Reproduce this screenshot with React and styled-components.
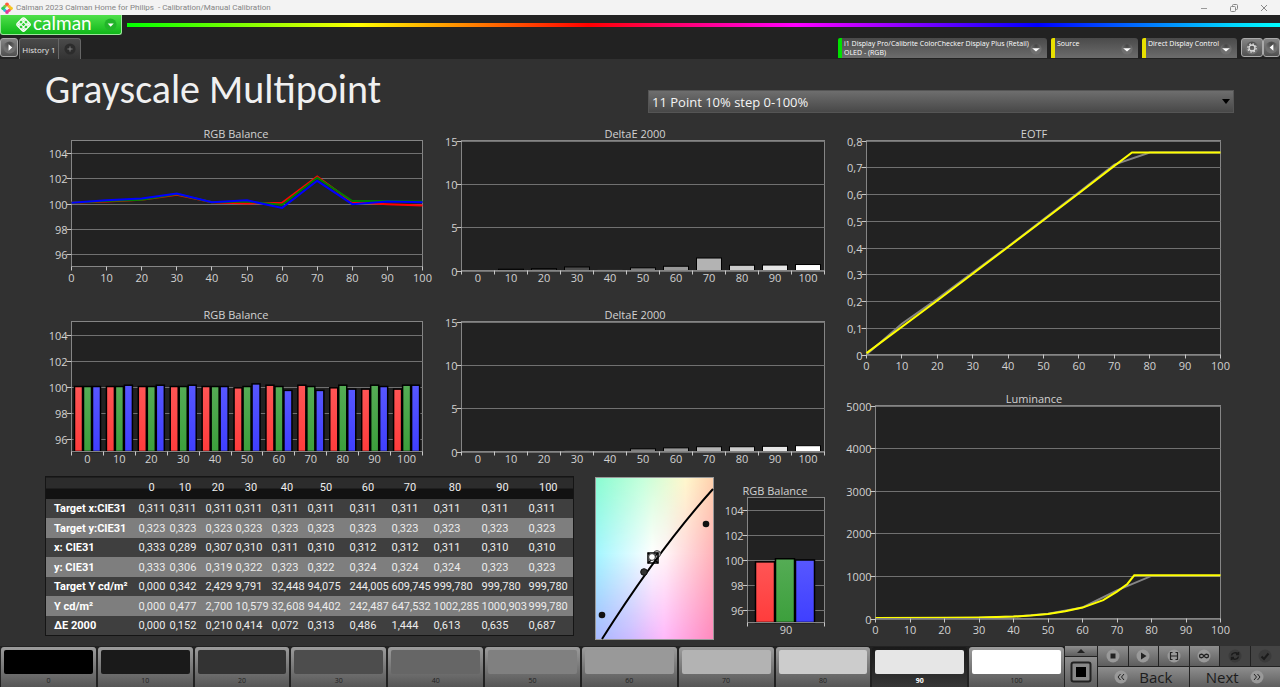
import React, { useState } from 'react';
import styled, { createGlobalStyle, css } from 'styled-components';

const GlobalStyle = createGlobalStyle`
    * {
        box-sizing: border-box;
    }

    body {
        margin: 0;
        background: #313131;
        color: #d8d8d8;
        font-family: 'Open Sans', 'Noto Sans', sans-serif;
    }

    button, select {
        margin: 0;
        padding: 0;
        border: none;
        font-family: inherit;
        cursor: pointer;
    }

    svg {
        display: block;
    }
`;

const Page = styled.div`
    display: flex;
    flex-direction: column;
    min-height: 100vh;
`;

/* window title bar */

const TitleBar = styled.div`
    display: flex;
    align-items: center;
    height: 15px;
    padding: 0 10px 0 1px;
    background: #f3f3f3;
    color: #858585;
    font-family: Roboto, sans-serif;
    font-size: 8px;
    line-height: 15px;
    white-space: pre;
`;

const WindowTitle = styled.span`
    flex: 1;
    margin-left: 3px;
`;

const WindowButtons = styled.div`
    display: flex;
    gap: 18px;
`;

const WindowButton = styled.button`
    display: flex;
    width: 12px;
    height: 12px;
    background: none;
`;

/* header */

const Header = styled.header`
    background: #222;
`;

const BrandRow = styled.div`
    display: flex;
    align-items: flex-start;
    height: 23px;
`;

const Brand = styled.button`
    display: flex;
    align-items: center;
    width: 122px;
    height: 20px;
    padding: 0 4px 0 14px;
    border: 1px solid #9be89b;
    border-top: none;
    border-radius: 0 0 3px 3px;
    background: linear-gradient(#4fe04a, #10b81a);
`;

const BrandName = styled.span`
    flex: 1;
    margin-left: 1px;
    padding-bottom: 3px;
    color: #fff;
    font-family: Lato, sans-serif;
    font-size: 19px;
    line-height: 16px;
    text-align: left;
`;

const Rainbow = styled.div`
    flex: 1;
    height: 4px;
    margin: 8px 0 0 5px;
    background: linear-gradient(90deg, #00ff00 0%, #ffff00 20%, #ff0000 40%, #ff00ff 58%, #0000ff 79%, #00d8ff 96%, #00ffff 100%);
`;

const TabRow = styled.div`
    display: flex;
    align-items: flex-start;
    height: 21px;
`;

const Spacer = styled.div`
    flex: 1;
`;

const SquareButton = styled.button`
    display: flex;
    align-items: center;
    justify-content: center;
    flex: none;
    width: ${(props) => props.$width}px;
    height: 19px;
    border: 1px solid #aaa;
    border-radius: 3px;
    background: linear-gradient(#858585, #505050);
`;

const HistoryTabs = styled.div`
    display: flex;
    height: 21px;
    margin-left: 1px;
    border: 1px solid #666;
    border-bottom: none;
    border-radius: 3px 3px 0 0;
    background: linear-gradient(#4a4a4a, #333);
`;

const HistoryTab = styled.button`
    display: flex;
    align-items: center;
    justify-content: center;
    width: ${(props) => props.$width}px;
    border-right: ${(props) => (props.$divided ? '1px solid #666' : 'none')};
    background: none;
    color: #e4e4e4;
    font-size: 8px;
`;

const Device = styled.button`
    display: flex;
    align-items: flex-start;
    flex: none;
    width: ${(props) => props.$width}px;
    height: 20px;
    margin-right: 4px;
    padding: 0 5px 0 2px;
    border-left: 4px solid ${(props) => props.$color};
    border-radius: 2px 3px 0 0;
    background: linear-gradient(#4a4a4a, #6c6c6c);
    color: #fff;
    font-size: 7px;
    font-weight: 500;
    line-height: 9px;
    text-align: left;
    white-space: nowrap;
`;

const DeviceLabel = styled.span`
    flex: 1;
    padding-top: 1px;
`;

const DeviceArrow = styled.span`
    align-self: center;
    margin-top: 2px;
`;

/* workspace */

const Main = styled.main`
    flex: 1;
    padding: 0 40px;
    background: #313131;
`;

const Heading = styled.div`
    display: grid;
    grid-template-columns: 603fr 586fr;
    align-items: center;
    height: 61px;
    padding: 0 6px 0 5px;
`;

const Title = styled.h1`
    margin: 0;
    color: #f0f0f0;
    font-family: Carlito, Lato, sans-serif;
    font-size: 40px;
    font-weight: 400;
    line-height: 61px;
    white-space: nowrap;
`;

const SelectWrap = styled.div`
    display: grid;
    align-items: center;
    margin-top: 24px;

    > * {
        grid-area: 1 / 1;
    }

    svg {
        justify-self: end;
        margin-right: 4px;
        pointer-events: none;
    }
`;

const Select = styled.select`
    width: 100%;
    height: 23px;
    padding: 0 3px;
    border: 1px solid #555;
    background: linear-gradient(#6e6e6e, #484848);
    color: #f4f4f4;
    font-size: 13px;
    appearance: none;
`;

const Workspace = styled.div`
    display: grid;
    grid-template-columns: 2fr 1fr;
`;

const LeftCharts = styled.div`
    display: grid;
    grid-template-columns: 1fr 1fr;
    align-content: start;
`;

const BottomPanels = styled.div`
    display: grid;
    grid-column: 1 / -1;
    grid-template-columns: 529fr 130fr 106fr;
    align-items: start;
    column-gap: 10px;
    padding: 1px 10px 0 5px;
`;

const CiePanel = styled.div`
    padding: 1px 0 0 11px;
`;

const ChartSvg = styled.svg`
    width: 100%;
    height: auto;
    font-family: 'Open Sans', 'Noto Sans', sans-serif;
    font-size: 11px;
    fill: #d2d2d2;
`;

/* table */

const Table = styled.table`
    width: 100%;
    border: 1px solid #151515;
    border-collapse: collapse;
    table-layout: fixed;
    color: #ececec;
    font-family: Roboto, sans-serif;
    font-size: 11px;
    white-space: nowrap;
`;

const HeadCell = styled.th`
    height: 22px;
    padding: 0 5px 0 0;
    background: linear-gradient(#2c2c2c 50%, #121212 50%);
    font-weight: 400;
    line-height: 22px;
    text-align: center;
`;

const Row = styled.tr`
    height: ${(props) => (props.$light ? 20 : 19)}px;
    background: ${(props) => (props.$light ? '#7e7e7e' : '#3f3f3f')};
`;

const RowHead = styled.th`
    padding: 0 0 0 8px;
    color: #fff;
    font-weight: 700;
    line-height: 19px;
    text-align: left;
`;

const Cell = styled.td`
    padding: 0;
    line-height: 19px;
`;

/* footer */

const Footer = styled.footer`
    display: flex;
    height: 41px;
    background: #222;
`;

const Swatches = styled.div`
    display: flex;
    flex: 1;
`;

const Swatch = styled.button`
    display: flex;
    flex: 1;
    flex-direction: column;
    align-items: stretch;
    justify-content: flex-start;
    padding: 3px 3px 0;
    border: 1px solid #222;
    border-bottom: none;
    border-radius: 4px 4px 0 0;
    background: linear-gradient(#9c9c9c, #565656);
    color: #222;
    font-size: 7px;
    line-height: 14px;

    ${(props) => props.$active && css`
        background: linear-gradient(#1a1a1a, #363636);
        color: #fff;
        font-weight: 700;
    `}
`;

const SwatchColor = styled.span`
    flex: none;
    height: 24px;
    border-radius: 2px;
    background: ${(props) => props.$color};
`;

const Controls = styled.div`
    display: grid;
    grid-template-columns: 32px 182px;
    gap: 1px;
`;

const PatternColumn = styled.div`
    display: grid;
    grid-template-rows: 10px 1fr;
    gap: 1px;
`;

const TransportGrid = styled.div`
    display: grid;
    grid-template-rows: 20px 1fr;
    gap: 1px;
`;

const ButtonRow = styled.div`
    display: flex;
    gap: 1px;
`;

const ControlButton = styled.button`
    display: flex;
    flex: 1;
    align-items: center;
    justify-content: center;
    gap: 11px;
    background: ${(props) => (props.$dim ? '#444' : 'linear-gradient(#8e8e8e, #5e5e5e)')};
    color: #1c1c1c;
    font-size: 15px;
    font-weight: 500;
    line-height: 20px;
`;

const levels = [0, 10, 20, 30, 40, 50, 60, 70, 80, 90, 100];

const redLine = [100.05, 100.15, 100.3, 100.7, 100.1, 100, 100.05, 102.15, 100.1, 99.95, 99.85];
const greenLine = [100.05, 100.2, 100.3, 100.75, 100.1, 100.15, 99.9, 102.05, 100.2, 100.2, 100.15];
const blueLine = [100.05, 100.25, 100.4, 100.8, 100.1, 100.25, 99.65, 101.8, 99.95, 100.15, 100.1];

const balance = [
    [100, 100, 100],
    [100, 100, 100.1],
    [100, 100, 100.1],
    [100, 100, 100.1],
    [100, 100, 100],
    [99.9, 100, 100.2],
    [100.1, 100, 99.7],
    [100.1, 100, 99.7],
    [99.9, 100.1, 99.8],
    [99.8, 100.1, 100],
    [99.8, 100.1, 100.1],
];

const measuredDelta = [0, 0.15, 0.21, 0.41, 0.07, 0.31, 0.49, 1.44, 0.61, 0.63, 0.69];
const chromaDelta = [0, 0.05, 0.05, 0.1, 0.05, 0.31, 0.42, 0.55, 0.55, 0.6, 0.67];

const tableRows = [
    ['Target x:CIE31', '0,311', '0,311', '0,311', '0,311', '0,311', '0,311', '0,311', '0,311', '0,311', '0,311', '0,311'],
    ['Target y:CIE31', '0,323', '0,323', '0,323', '0,323', '0,323', '0,323', '0,323', '0,323', '0,323', '0,323', '0,323'],
    ['x: CIE31', '0,333', '0,289', '0,307', '0,310', '0,311', '0,310', '0,312', '0,312', '0,311', '0,310', '0,310'],
    ['y: CIE31', '0,333', '0,306', '0,319', '0,322', '0,323', '0,322', '0,324', '0,324', '0,324', '0,323', '0,323'],
    ['Target Y cd/m²', '0,000', '0,342', '2,429', '9,791', '32,448', '94,075', '244,005', '609,745', '999,780', '999,780', '999,780'],
    ['Y cd/m²', '0,000', '0,477', '2,700', '10,579', '32,608', '94,402', '242,487', '647,532', '1002,285', '1000,903', '999,780'],
    ['ΔE 2000', '0,000', '0,152', '0,210', '0,414', '0,072', '0,313', '0,486', '1,444', '0,613', '0,635', '0,687'],
];

const columnWidths = [93, 31, 36, 30, 36, 36, 42, 42, 42, 48, 47, 45];

const balanceTicks = [96, 98, 100, 102, 104].map((v) => [v, String(v)]);
const deltaTicks = [0, 5, 10, 15].map((v) => [v, String(v)]);
const eotfTicks = [0, 1, 2, 3, 4, 5, 6, 7, 8].map((v) => [v / 10, v ? `0,${v}` : '0']);
const luminanceTicks = [0, 1000, 2000, 3000, 4000, 5000].map((v) => [v, String(v)]);

const barColors = ['red', 'green', 'blue'];

const scaleY = (plot, range, v) =>
    plot.bottom - ((v - range[0]) / (range[1] - range[0])) * (plot.bottom - plot.top);

const toPoints = (plot, range, points) =>
    points
        .map(([x, y]) => `${plot.left + (x / 100) * (plot.right - plot.left)},${scaleY(plot, range, y)}`)
        .join(' ');

const GradientDefs = styled.svg`
    position: absolute;
`;

const Gradients = () => (
    <GradientDefs width="0" height="0" aria-hidden="true">
        <defs>
            <linearGradient id="bar-red" x2="0" y2="1">
                <stop stopColor="#ff5555" />
                <stop offset="1" stopColor="#ff3c3c" />
            </linearGradient>
            <linearGradient id="bar-green" x2="0" y2="1">
                <stop stopColor="#55ac55" />
                <stop offset="1" stopColor="#3c9f3c" />
            </linearGradient>
            <linearGradient id="bar-blue" x2="0" y2="1">
                <stop stopColor="#5757ff" />
                <stop offset="1" stopColor="#3f3fff" />
            </linearGradient>
            <radialGradient id="knob" cy="0.2">
                <stop stopColor="#444" />
                <stop offset="1" stopColor="#707070" />
            </radialGradient>
        </defs>
    </GradientDefs>
);

const Chart = ({ title, titleX, width = 400, height, plot, range, ticks, categories, children }) => {
    const banded = Boolean(categories);
    const labels = categories || levels;
    const step = (plot.right - plot.left) / (banded ? labels.length : labels.length - 1);
    const tickCount = banded ? labels.length + 1 : labels.length;

    return (
        <ChartSvg viewBox={`0 0 ${width} ${height}`} role="img" aria-label={title}>
            <text x={titleX} y={plot.top - 3} textAnchor="middle">{title}</text>
            <rect
                x={plot.left}
                y={plot.top}
                width={plot.right - plot.left}
                height={plot.bottom - plot.top}
                fill="#222"
                stroke="#858585"
            />
            {ticks.map(([value, label]) => {
                const y = Math.round(scaleY(plot, range, value)) + 0.5;
                return (
                    <g key={label}>
                        <path d={`M${plot.left} ${y}H${plot.right}`} stroke="#717171" />
                        <path d={`M${plot.left - 5} ${y}H${plot.left}`} stroke="#c8c8c8" />
                        <text x={plot.left - 4} y={y + 4} textAnchor="end">{label}</text>
                    </g>
                );
            })}
            {children}
            <path d={`M${plot.left} ${plot.bottom}H${plot.right}`} stroke="#858585" />
            {Array.from({ length: tickCount }, (_, i) => {
                const x = Math.round(plot.left + i * step - 0.5) + 0.5;
                return <path key={i} d={`M${x} ${plot.bottom}v4`} stroke="#c8c8c8" />;
            })}
            {labels.map((label, i) => (
                <text
                    key={label}
                    x={plot.left + (banded ? i + 0.5 : i) * step}
                    y={plot.bottom + (banded ? 11 : 15)}
                    textAnchor="middle"
                >
                    {label}
                </text>
            ))}
        </ChartSvg>
    );
};

const BalanceLineChart = () => {
    const plot = { left: 31.5, right: 382.5, top: 20.5, bottom: 146.5 };
    const range = [95, 105];
    const line = (values) => toPoints(plot, range, values.map((v, i) => [levels[i], v]));

    return (
        <Chart title="RGB Balance" titleX={196} height={181} plot={plot} range={range} ticks={balanceTicks}>
            <g fill="none" strokeWidth="2">
                <polyline points={line(redLine)} stroke="#f00" />
                <polyline points={line(greenLine)} stroke="#008000" />
                <polyline points={line(blueLine)} stroke="#00f" />
            </g>
        </Chart>
    );
};

const BalanceBars = ({ plot, range, rows, barWidth, inset }) => {
    const step = (plot.right - plot.left) / rows.length;
    return rows.map((row, i) =>
        row.map((value, j) => {
            const y = scaleY(plot, range, value);
            return (
                <rect
                    key={`${i}-${j}`}
                    x={plot.left + i * step + inset + j * barWidth}
                    y={y}
                    width={barWidth - 1}
                    height={plot.bottom - y}
                    fill={`url(#bar-${barColors[j]})`}
                    stroke="#000"
                    strokeWidth="1.5"
                />
            );
        })
    );
};

const BalanceBarChart = () => {
    const plot = { left: 31.5, right: 382.5, top: 20.5, bottom: 150.5 };
    const range = [95, 105];

    return (
        <Chart title="RGB Balance" titleX={196} height={174} plot={plot} range={range} ticks={balanceTicks} categories={levels}>
            <BalanceBars plot={plot} range={range} rows={balance} barWidth={9} inset={3} />
        </Chart>
    );
};

const DeltaChart = ({ values, height }) => {
    const plot = { left: 21.5, right: 384.5, top: 20.5, bottom: 150.5 };
    const range = [0, 15];
    const step = (plot.right - plot.left) / values.length;

    return (
        <Chart title="DeltaE 2000" titleX={195} height={height} plot={plot} range={range} ticks={deltaTicks} categories={levels}>
            {values.map((value, i) => {
                const y = scaleY(plot, range, value);
                const shade = Math.round((levels[i] / 100) * 255);
                return (
                    <rect
                        key={levels[i]}
                        x={plot.left + i * step + 4}
                        y={y}
                        width={step - 8}
                        height={plot.bottom - y}
                        fill={`rgb(${shade}, ${shade}, ${shade})`}
                        stroke={value > 0.1 ? '#000' : 'none'}
                    />
                );
            })}
        </Chart>
    );
};

const EotfChart = () => {
    const plot = { left: 26.5, right: 380.5, top: 20.5, bottom: 234.5 };
    const range = [0, 0.8];

    return (
        <Chart title="EOTF" titleX={194} height={264} plot={plot} range={range} ticks={eotfTicks}>
            <g fill="none" strokeWidth="2">
                <polyline
                    points={toPoints(plot, range, [[0, 0], [10, 0.115], [20, 0.208], [30, 0.306], [40, 0.404], [50, 0.505], [60, 0.606], [70, 0.71], [80, 0.755], [100, 0.755]])}
                    stroke="#858585"
                />
                <polyline
                    points={toPoints(plot, range, [[0, 0.005], [20, 0.202], [40, 0.402], [60, 0.603], [70, 0.705], [75, 0.755], [100, 0.755]])}
                    stroke="#ff0"
                />
            </g>
        </Chart>
    );
};

const LuminanceChart = () => {
    const plot = { left: 35.5, right: 380.5, top: 21.5, bottom: 234.5 };
    const range = [0, 5000];

    return (
        <Chart title="Luminance" titleX={194} height={262} plot={plot} range={range} ticks={luminanceTicks}>
            <g fill="none" strokeWidth="2">
                <polyline
                    points={toPoints(plot, range, [[0, 8], [30, 20], [40, 45], [50, 110], [60, 260], [70, 660], [80, 1000], [100, 1000]])}
                    stroke="#858585"
                />
                <polyline
                    points={toPoints(plot, range, [[0, 12], [20, 16], [30, 24], [40, 46], [45, 70], [50, 106], [55, 170], [60, 256], [66, 430], [70, 630], [73, 810], [75, 1015], [100, 1015]])}
                    stroke="#ff0"
                />
            </g>
        </Chart>
    );
};

const SingleBalanceChart = () => {
    const plot = { left: 23.5, right: 100.5, top: 21.5, bottom: 146.5 };
    const range = [95, 105];

    return (
        <Chart title="RGB Balance" titleX={51} width={106} height={164} plot={plot} range={range} ticks={balanceTicks} categories={[90]}>
            <BalanceBars plot={plot} range={range} rows={[[99.85, 100.1, 100]]} barWidth={20} inset={8} />
        </Chart>
    );
};

const ChromaticityChart = () => (
    <ChartSvg viewBox="0 0 119 163" role="img" aria-label="CIE chromaticity">
        <defs>
            <linearGradient id="cie-top">
                <stop stopColor="#88fbd0" />
                <stop offset="0.4" stopColor="#c4ffda" />
                <stop offset="0.76" stopColor="#fff8cc" />
                <stop offset="1" stopColor="#ffd0ac" />
            </linearGradient>
            <linearGradient id="cie-middle">
                <stop stopColor="#a2f6ff" />
                <stop offset="0.48" stopColor="#fff" />
                <stop offset="0.6" stopColor="#fff4f6" />
                <stop offset="1" stopColor="#ffb2b8" />
            </linearGradient>
            <linearGradient id="cie-bottom">
                <stop stopColor="#a6b8ff" />
                <stop offset="0.3" stopColor="#ccbaff" />
                <stop offset="0.58" stopColor="#ffb8fa" />
                <stop offset="1" stopColor="#ff88bb" />
            </linearGradient>
            <linearGradient id="fade-down" x2="0" y2="1">
                <stop stopColor="#fff" />
                <stop offset="0.47" stopColor="#000" />
            </linearGradient>
            <linearGradient id="fade-up" x2="0" y2="1">
                <stop offset="0.47" stopColor="#000" />
                <stop offset="1" stopColor="#fff" />
            </linearGradient>
            <mask id="mask-top">
                <rect width="119" height="163" fill="url(#fade-down)" />
            </mask>
            <mask id="mask-bottom">
                <rect width="119" height="163" fill="url(#fade-up)" />
            </mask>
        </defs>
        <rect width="119" height="163" fill="url(#cie-middle)" />
        <rect width="119" height="163" fill="url(#cie-top)" mask="url(#mask-top)" />
        <rect width="119" height="163" fill="url(#cie-bottom)" mask="url(#mask-bottom)" />
        <rect x="0.5" y="0.5" width="118" height="162" fill="none" stroke="#999" />
        <path d="M7 162C40 110 75 60 118 12" fill="none" stroke="#000" strokeWidth="2" />
        <circle cx="111" cy="47" r="3.3" fill="#111" />
        <circle cx="49" cy="95" r="3.3" fill="#333" stroke="#111" />
        <circle cx="7" cy="138" r="3.3" fill="#111" />
        <circle cx="62" cy="77" r="3.4" fill="#bbb" stroke="#444" />
        <rect x="53" y="76" width="10" height="10" fill="none" stroke="#000" strokeWidth="1.5" />
        <path d="M53 76l10 10M63 76L53 86" stroke="#000" strokeWidth="1.5" />
        <circle cx="57" cy="80" r="3.4" fill="#fff" stroke="#333" />
    </ChartSvg>
);

const AppIcon = () => (
    <svg width="12" height="12" viewBox="0 0 12 12">
        <circle cx="6" cy="2.3" r="1.9" fill="#ff5a3c" />
        <circle cx="3.9" cy="4.3" r="1.6" fill="#7fce3c" />
        <circle cx="8.1" cy="4.3" r="1.6" fill="#ffb02e" />
        <circle cx="2.2" cy="6.3" r="1.9" fill="#30c860" />
        <circle cx="9.9" cy="6.3" r="1.9" fill="#f5c81e" />
        <circle cx="3.9" cy="8.3" r="1.6" fill="#28b8e8" />
        <circle cx="8.1" cy="8.3" r="1.6" fill="#ff4a70" />
        <circle cx="6" cy="10" r="1.9" fill="#e0389c" />
    </svg>
);

const CalmanMark = () => (
    <svg width="17" height="17" viewBox="0 0 17 17">
        <g transform="rotate(45 8.5 8.5)" fill="none" stroke="#fff">
            <rect x="3.2" y="3.2" width="10.6" height="10.6" rx="2" strokeWidth="1.3" />
            <path d="M6.7 3v11M10.3 3v11M3 6.7h11M3 10.3h11" strokeWidth="1.1" />
        </g>
        <g fill="#fff">
            <circle cx="8.5" cy="3.6" r="1.2" />
            <circle cx="13.4" cy="8.5" r="1.2" />
            <circle cx="8.5" cy="13.4" r="1.2" />
            <circle cx="3.6" cy="8.5" r="1.2" />
        </g>
    </svg>
);

const Knob = ({ size = 14, fill = 'url(#knob)', children }) => (
    <svg width={size} height={size} viewBox="0 0 14 14">
        <circle cx="7" cy="7" r="6.5" fill={fill} />
        {children}
    </svg>
);

const transport = [
    { name: 'Stop', icon: <path d="M4.5 4.5h5v5h-5z" fill="#222" /> },
    { name: 'Play', icon: <path d="M5 3.5v7l5.5-3.5z" fill="#222" /> },
    { name: 'Read series', icon: <path d="M3.5 3v8M10.5 3v8M3.5 7h7M3 3.5h2.5M3 10.5h2.5M8.500 3.500H11M8.500 10.500H11" fill="none" stroke="#222" strokeWidth="1.2" /> },
    { name: 'Read continuous', icon: <path d="M7 7C5.5 4.500 2.500 4.800 2.500 7S5.500 9.500 7 7s4.500-2.200 4.500 0S8.500 9.500 7 7z" fill="none" stroke="#222" strokeWidth="1.3" /> },
    { name: 'Refresh', dim: true, icon: <path d="M3.5 6.500C4 3.500 8 3 10 5M10.500 3v2.500H8M10.500 7.500C10 10.500 6 11 4 9M3.500 11V8.500H6" fill="none" stroke="#1c1c1c" strokeWidth="1.5" /> },
    { name: 'Confirm', dim: true, icon: <path d="M3.5 7.5l2.5 2.5 4.500-5.500" fill="none" stroke="#1c1c1c" strokeWidth="2" /> },
];

const App = () => {
    const [level, setLevel] = useState(90);

    return (
        <Page>
            <GlobalStyle />
            <Gradients />
            <TitleBar>
                <AppIcon />
                <WindowTitle>{'Calman 2023 Calman Home for Philips  - Calibration/Manual Calibration'}</WindowTitle>
                <WindowButtons>
                    <WindowButton aria-label="Minimize">
                        <svg width="12" height="12"><path d="M3 6.5h6" stroke="#999" /></svg>
                    </WindowButton>
                    <WindowButton aria-label="Restore">
                        <svg width="12" height="12" fill="none" stroke="#888">
                            <rect x="2.5" y="4.5" width="5" height="5" rx="1" />
                            <path d="M4.5 4.5v-1q0-1 1-1h3q1 0 1 1v3q0 1-1 1h-1" />
                        </svg>
                    </WindowButton>
                    <WindowButton aria-label="Close">
                        <svg width="12" height="12"><path d="M3 3l6 6M9 3L3 9" stroke="#888" /></svg>
                    </WindowButton>
                </WindowButtons>
            </TitleBar>

            <Header>
                <BrandRow>
                    <Brand>
                        <CalmanMark />
                        <BrandName>calman</BrandName>
                        <Knob size={13} fill="#22b42a">
                            <path d="M4 6h6.5L7.2 9.5z" fill="#fff" />
                        </Knob>
                    </Brand>
                    <Rainbow />
                </BrandRow>
                <TabRow>
                    <SquareButton $width={18} aria-label="Show panel">
                        <Knob size={13}>
                            <path d="M6 3.5v7l4-3.5z" fill="#fff" />
                        </Knob>
                    </SquareButton>
                    <HistoryTabs>
                        <HistoryTab $width={39} $divided>History 1</HistoryTab>
                        <HistoryTab $width={21} aria-label="Add history">
                            <Knob size={12} fill="#2c2c2c">
                                <path d="M7 4v6M4 7h6" stroke="#888" />
                            </Knob>
                        </HistoryTab>
                    </HistoryTabs>
                    <Spacer />
                    <Device $width={209} $color="#00e000">
                        <DeviceLabel>
                            i1 Display Pro/Calibrite ColorChecker Display Plus (Retail)
                            <br />
                            OLED - (RGB)
                        </DeviceLabel>
                        <DeviceArrow><Knob size={12}><path d="M2.5 6h9L7 10z" fill="#fff" /></Knob></DeviceArrow>
                    </Device>
                    <Device $width={87} $color="#e8e000">
                        <DeviceLabel>Source</DeviceLabel>
                        <DeviceArrow><Knob size={12}><path d="M2.5 6h9L7 10z" fill="#fff" /></Knob></DeviceArrow>
                    </Device>
                    <Device $width={95} $color="#e8e000">
                        <DeviceLabel>Direct Display Control</DeviceLabel>
                        <DeviceArrow><Knob size={12}><path d="M2.5 6h9L7 10z" fill="#fff" /></Knob></DeviceArrow>
                    </Device>
                    <SquareButton $width={22} aria-label="Settings">
                        <Knob>
                            <circle cx="7" cy="7" r="3" fill="none" stroke="#ddd" strokeWidth="1.3" />
                            <circle cx="7" cy="7" r="4.2" fill="none" stroke="#ddd" strokeWidth="1.2" strokeDasharray="1.65 1.65" />
                        </Knob>
                    </SquareButton>
                    <SquareButton $width={17} aria-label="Hide panel">
                        <Knob size={13}>
                            <path d="M9 3.5v7L5 7z" fill="#fff" />
                        </Knob>
                    </SquareButton>
                </TabRow>
            </Header>

            <Main>
                <Heading>
                    <Title>Grayscale Multipoint</Title>
                    <SelectWrap>
                        <Select aria-label="Point series">
                            <option>11 Point 10% step 0-100%</option>
                        </Select>
                        <svg width="8" height="5"><path d="M0 0h8L4 5z" fill="#000" /></svg>
                    </SelectWrap>
                </Heading>
                <Workspace>
                    <LeftCharts>
                        <BalanceLineChart />
                        <DeltaChart values={measuredDelta} height={181} />
                        <BalanceBarChart />
                        <DeltaChart values={chromaDelta} height={174} />
                        <BottomPanels>
                            <Table>
                                <colgroup>
                                    {columnWidths.map((width, i) => (
                                        <col key={i} style={{ width: `${(width / 528) * 100}%` }} />
                                    ))}
                                </colgroup>
                                <thead>
                                    <tr>
                                        <HeadCell />
                                        {levels.map((value) => <HeadCell key={value} scope="col">{value}</HeadCell>)}
                                    </tr>
                                </thead>
                                <tbody>
                                    {tableRows.map(([label, ...values], i) => (
                                        <Row key={label} $light={i % 2 === 1}>
                                            <RowHead scope="row">{label}</RowHead>
                                            {values.map((value, j) => <Cell key={levels[j]}>{value}</Cell>)}
                                        </Row>
                                    ))}
                                </tbody>
                            </Table>
                            <CiePanel>
                                <ChromaticityChart />
                            </CiePanel>
                            <SingleBalanceChart />
                        </BottomPanels>
                    </LeftCharts>
                    <div>
                        <EotfChart />
                        <LuminanceChart />
                    </div>
                </Workspace>
            </Main>

            <Footer>
                <Swatches>
                    {levels.map((value) => {
                        const shade = value === 0 ? 0 : Math.round((value / 100) * 255);
                        return (
                            <Swatch key={value} $active={value === level} onClick={() => setLevel(value)}>
                                <SwatchColor $color={`rgb(${shade}, ${shade}, ${shade})`} />
                                {value}
                            </Swatch>
                        );
                    })}
                </Swatches>
                <Controls>
                    <PatternColumn>
                        <ControlButton aria-label="Expand">
                            <svg width="8" height="4"><path d="M0 4h8L4 0z" fill="#222" /></svg>
                        </ControlButton>
                        <ControlButton aria-label="Pattern window">
                            <svg width="22" height="22">
                                <rect x="1.5" y="1.5" width="19" height="19" rx="2" fill="#888" stroke="#222" strokeWidth="2" />
                                <path d="M6 6h10v10H6z" fill="#000" />
                            </svg>
                        </ControlButton>
                    </PatternColumn>
                    <TransportGrid>
                        <ButtonRow>
                            {transport.map(({ name, dim, icon }) => (
                                <ControlButton key={name} $dim={dim} aria-label={name}>
                                    <Knob fill={dim ? '#3a3a3a' : '#999'}>{icon}</Knob>
                                </ControlButton>
                            ))}
                        </ButtonRow>
                        <ButtonRow>
                            <ControlButton>
                                <Knob fill="#999">
                                    <path d="M6.5 4L4 7l2.5 3M10 4L7.5 7l2.5 3" fill="none" stroke="#222" />
                                </Knob>
                                Back
                            </ControlButton>
                            <ControlButton>
                                Next
                                <Knob fill="#999">
                                    <path d="M4 4l2.5 3L4 10M7.5 4L10 7l-2.5 3" fill="none" stroke="#222" />
                                </Knob>
                            </ControlButton>
                        </ButtonRow>
                    </TransportGrid>
                </Controls>
            </Footer>
        </Page>
    );
};

export default App;
